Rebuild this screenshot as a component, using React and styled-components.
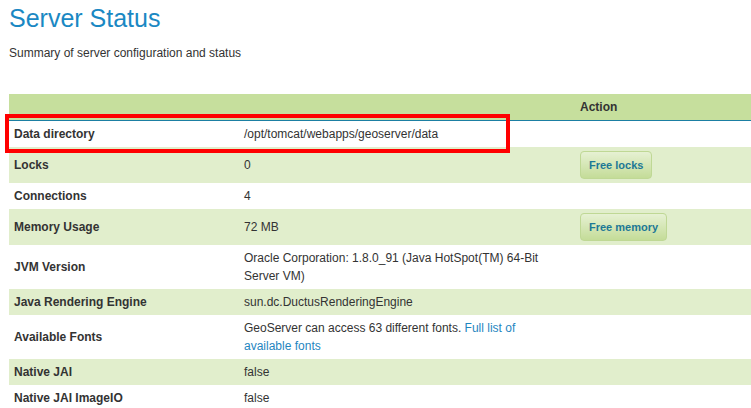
import React from 'react'
import styled, { createGlobalStyle } from 'styled-components'

const GlobalStyle = createGlobalStyle`
  html, body {
    margin: 0;
    padding: 0;
    background: #ffffff;
    overflow: hidden;
  }
  body {
    font-family: "Liberation Sans", Arial, sans-serif;
    font-size: 12px;
    color: #333333;
  }
`

const Page = styled.div`
  padding: 0 0 0 9px;
`

const Title = styled.h1`
  margin: 3px 0 0;
  font-size: 25px;
  line-height: 30px;
  font-weight: normal;
  color: #1a88c3;
`

const Subtitle = styled.p`
  margin: 11px 0 32px;
  line-height: 18px;
`

const TableWrap = styled.div`
  position: relative;
  width: 780px;
`

const Table = styled.table`
  width: 100%;
  border-collapse: collapse;
  table-layout: fixed;
`

const HeadCell = styled.th`
  background: #c6df9d;
  border-bottom: 1px solid #1b7fa3;
  padding: 4px ${p => p.$padRight || '5px'} 4px 5px;
  line-height: 18px;
  text-align: left;
  font-weight: bold;
  color: #333;
  width: ${p => p.$width || 'auto'};
`

const Row = styled.tr`
  background: ${p => (p.$alt ? '#e1eecc' : '#ffffff')};
`

const Label = styled.td`
  padding: 4px 5px;
  line-height: 18px;
  font-weight: bold;
  vertical-align: middle;
`

const Value = styled.td`
  padding: 4px ${p => p.$padRight || '5px'} 4px 5px;
  line-height: 18px;
  vertical-align: middle;
`

const Link = styled.a`
  color: #1f86bf;
  text-decoration: none;
`

const ActionButton = styled.button`
  height: 28px;
  padding: 0 8px;
  font-family: "Liberation Sans", Arial, sans-serif;
  font-size: 11px;
  font-weight: bold;
  color: #1d7896;
  border: 1px solid #bfd895;
  border-radius: 4px;
  background: linear-gradient(to bottom, #e6f1d3, #c4dc98);
  cursor: pointer;
  display: block;
`

const Highlight = styled.div`
  position: absolute;
  left: -4px;
  top: 20px;
  width: 497px;
  height: 31px;
  border: 4px solid #ff0000;
  pointer-events: none;
`

const rows = [
  { label: 'Data directory', value: '/opt/tomcat/webapps/geoserver/data' },
  { label: 'Locks', value: '0', action: 'Free locks' },
  { label: 'Connections', value: '4' },
  { label: 'Memory Usage', value: '72 MB', action: 'Free memory' },
  { label: 'JVM Version', value: 'Oracle Corporation: 1.8.0_91 (Java HotSpot(TM) 64-Bit Server VM)' },
  { label: 'Java Rendering Engine', value: 'sun.dc.DuctusRenderingEngine' },
  {
    label: 'Available Fonts',
    value: <>GeoServer can access 63 different fonts. <Link href="#">Full list of available fonts</Link></>,
  },
  { label: 'Native JAI', value: 'false' },
  { label: 'Native JAI ImageIO', value: 'false' },
]

export default function App() {
  return <>
    <GlobalStyle />
    <Page>
      <Title>Server Status</Title>
      <Subtitle>Summary of server configuration and status</Subtitle>
      <TableWrap>
        <Table>
          <thead>
            <tr>
              <HeadCell $width='220px'></HeadCell>
              <HeadCell $width='310px' $padRight='21px'></HeadCell>
              <HeadCell>Action</HeadCell>
            </tr>
          </thead>
          <tbody>
            {rows.map((r, i) => (
              <Row key={r.label} $alt={i % 2 === 1}>
                <Label>{r.label}</Label>
                <Value $padRight='21px'>{r.value}</Value>
                <Value>{r.action && <ActionButton>{r.action}</ActionButton>}</Value>
              </Row>
            ))}
          </tbody>
        </Table>
        <Highlight />
      </TableWrap>
    </Page>
  </>
}
